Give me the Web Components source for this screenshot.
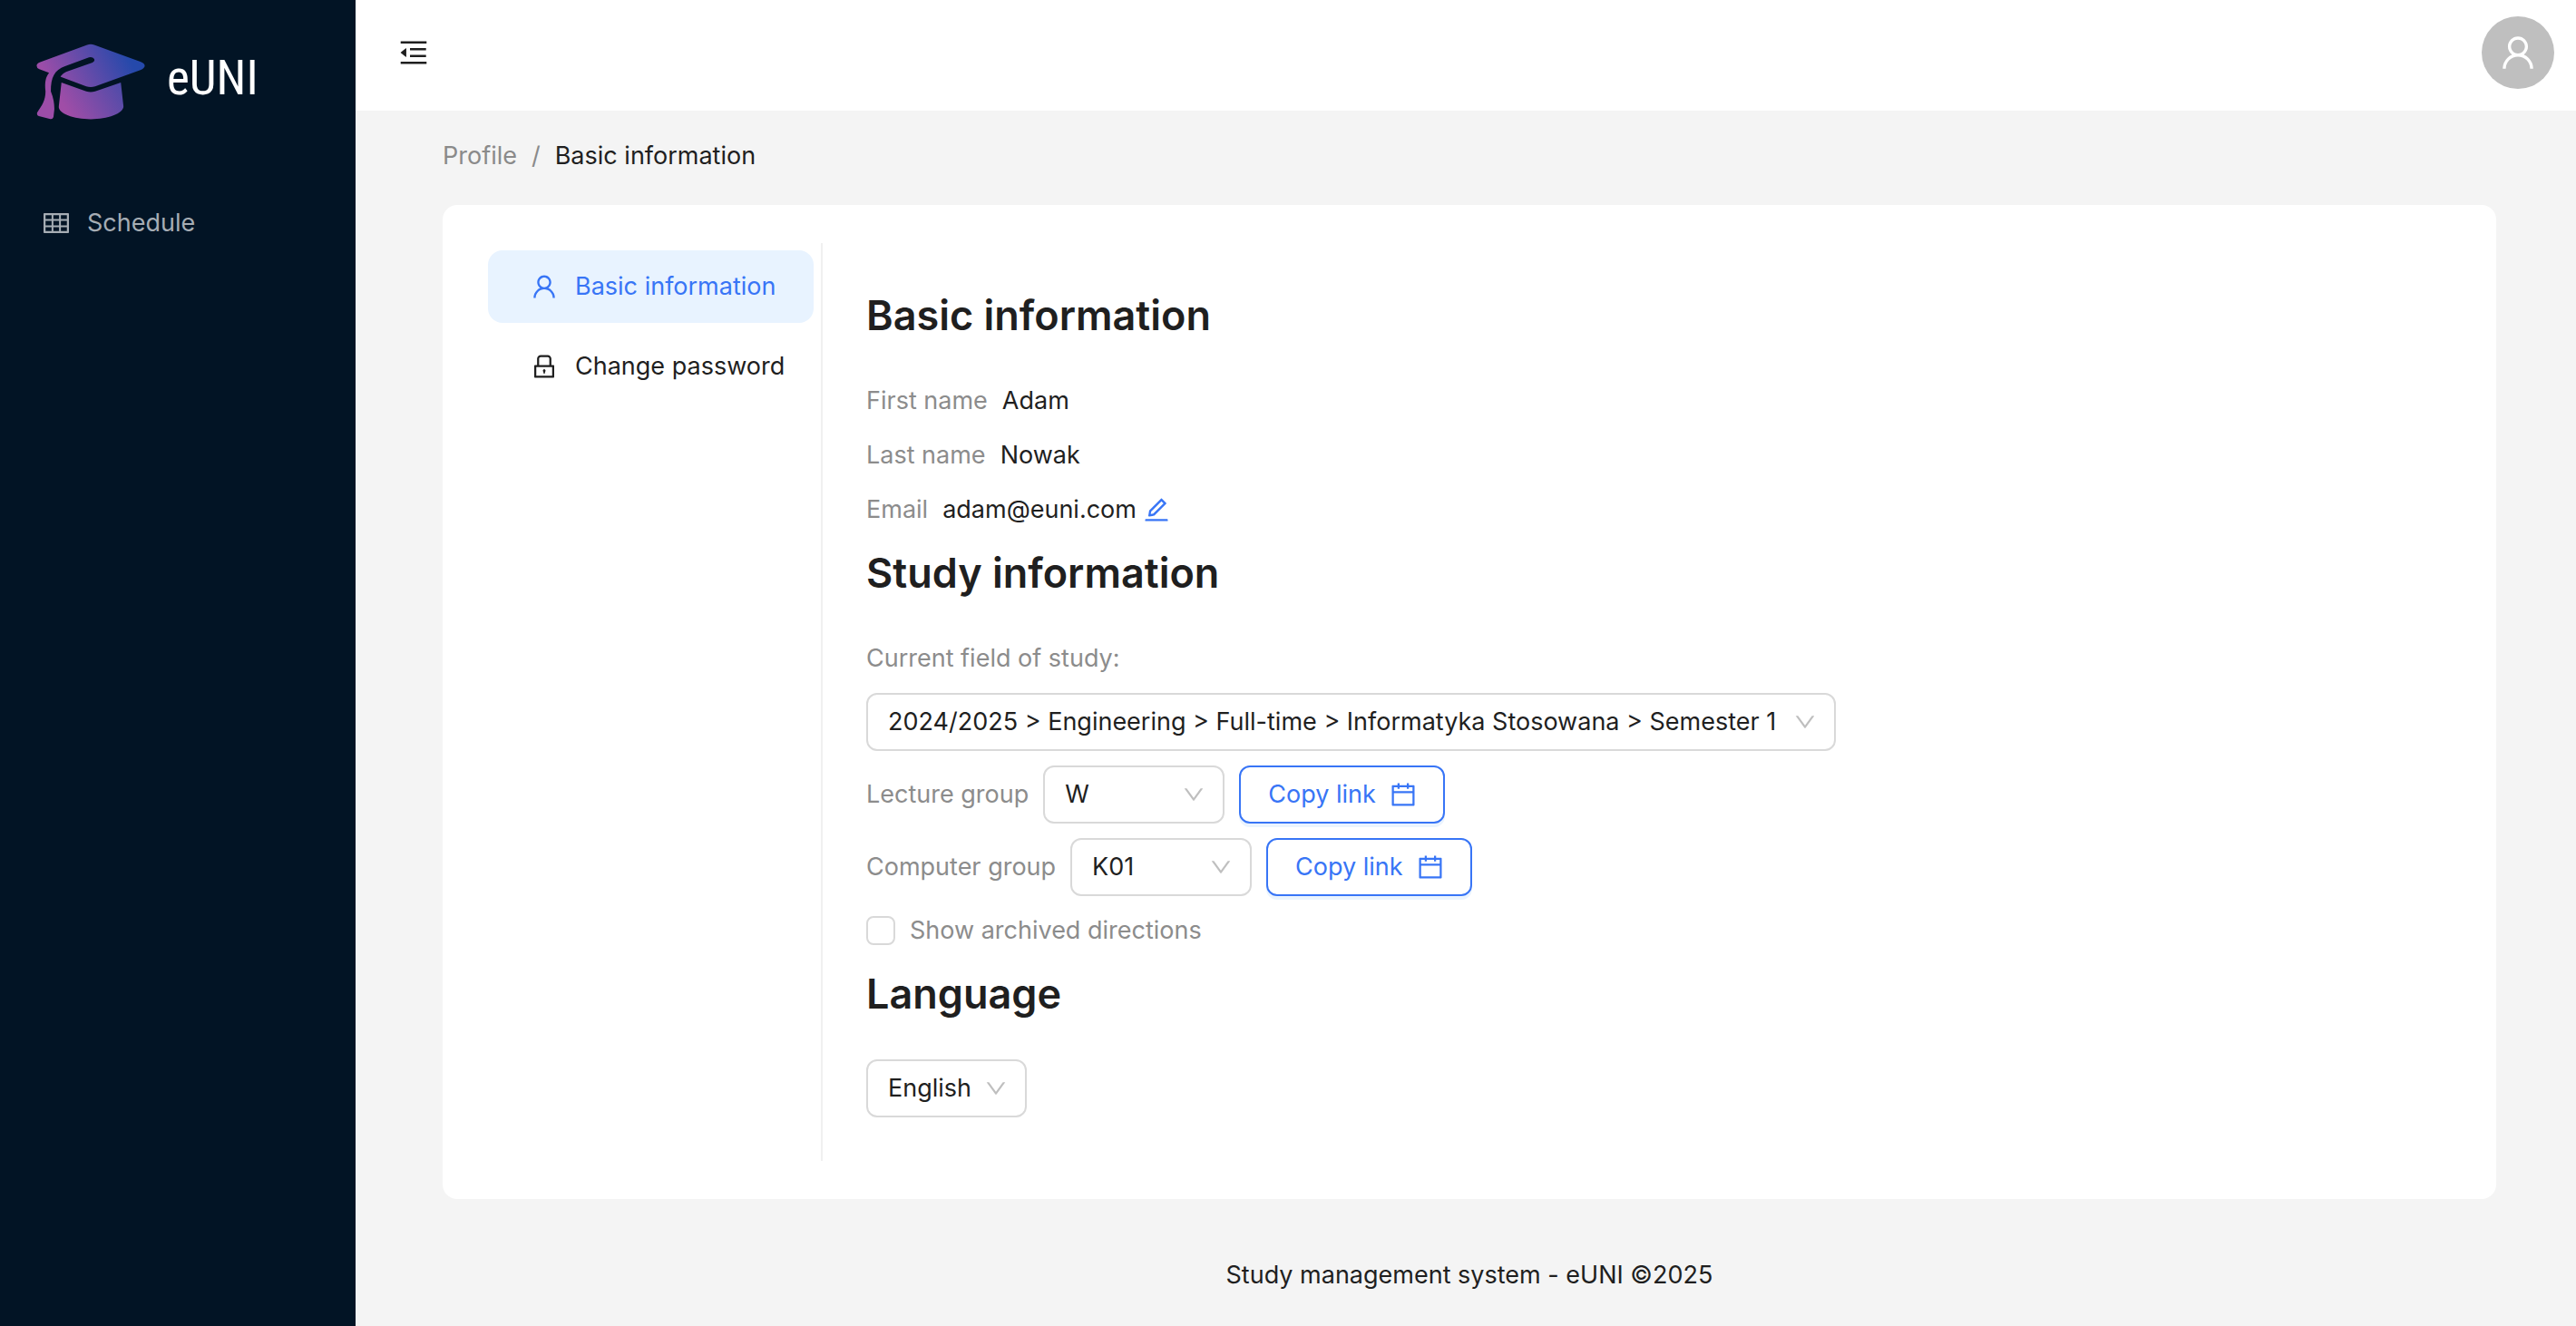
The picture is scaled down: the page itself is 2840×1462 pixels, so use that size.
<!DOCTYPE html>
<html lang="en">
<head>
<meta charset="utf-8">
<title>eUNI</title>
<style>
  html, body { margin: 0; height: 100%; }
  body { font-family: Inter, "Liberation Sans", sans-serif; font-size: 27px; line-height: 44px; color: #1f1f1f; background: #f4f4f4; }
</style>
</head>
<body>
<euni-app></euni-app>
<script>
const ICONS = {
  user: '<path d="M858.5 763.6a374 374 0 0 0-80.6-119.5 375.63 375.63 0 0 0-119.5-80.6c-.4-.2-.8-.3-1.2-.5C719.5 518 760 444.7 760 362c0-137-111-248-248-248S264 225 264 362c0 82.700 40.500 156 102.800 201.100-.4.2-.8.3-1.200.5-44.800 18.900-85 46-119.500 80.600a375.630 375.630 0 0 0-80.600 119.500A371.700 371.700 0 0 0 136 901.800a8 8 0 0 0 8 8.200h60c4.400 0 7.900-3.500 8-7.800 2-77.200 33-149.500 87.800-204.300 56.700-56.700 132-87.900 212.200-87.900s155.500 31.200 212.200 87.900C779 752.700 810 825 812 902.200c.1 4.400 3.600 7.800 8 7.800h60a8 8 0 0 0 8-8.200c-1-47.800-10.900-94.300-29.500-138.200zM512 534c-45.900 0-89.100-17.900-121.600-50.400S340 407.900 340 362c0-45.900 17.900-89.100 50.400-121.600S466.100 190 512 190s89.100 17.900 121.600 50.400S684 316.100 684 362c0 45.900-17.900 89.100-50.400 121.600S557.900 534 512 534z"/>',
  lock: '<path d="M832 464h-68V240c0-70.700-57.300-128-128-128H388c-70.700 0-128 57.300-128 128v224h-68c-17.700 0-32 14.300-32 32v384c0 17.700 14.300 32 32 32h640c17.700 0 32-14.300 32-32V496c0-17.700-14.300-32-32-32zM332 240c0-30.900 25.100-56 56-56h248c30.900 0 56 25.100 56 56v224H332V240zm460 600H232V536h560v304zM484 701v53c0 4.400 3.600 8 8 8h40c4.400 0 8-3.600 8-8v-53a48.010 48.010 0 1 0-56 0z"/>',
  table: '<path d="M928 160H96c-17.700 0-32 14.300-32 32v640c0 17.700 14.300 32 32 32h832c17.700 0 32-14.300 32-32V192c0-17.700-14.300-32-32-32zm-40 208H676V232h212v136zm0 224H676V432h212v160zM412 432h200v160H412V432zm200-64H412V232h200v136zm-476 64h212v160H136V432zm0-200h212v136H136V232zm0 424h212v136H136V656zm276 0h200v136H412V656zm476 136H676V656h212v136z"/>',
  fold: '<path d="M408 442h480c4.400 0 8-3.600 8-8v-56c0-4.400-3.600-8-8-8H408c-4.400 0-8 3.600-8 8v56c0 4.400 3.600 8 8 8zm-8 204c0 4.400 3.600 8 8 8h480c4.400 0 8-3.600 8-8v-56c0-4.400-3.600-8-8-8H408c-4.400 0-8 3.600-8 8v56zm504-486H120c-4.400 0-8 3.600-8 8v56c0 4.400 3.600 8 8 8h784c4.400 0 8-3.600 8-8v-56c0-4.400-3.600-8-8-8zm0 632H120c-4.400 0-8 3.600-8 8v56c0 4.400 3.600 8 8 8h784c4.400 0 8-3.600 8-8v-56c0-4.400-3.600-8-8-8zM115.400 518.900L271.700 642c5.800 4.600 14.400.5 14.400-6.900V388.900c0-7.400-8.500-11.500-14.400-6.900L115.400 505.100a8.740 8.740 0 0 0 0 13.800z"/>',
  down: '<path d="M884 256h-75c-5.100 0-9.900 2.500-12.900 6.600L512 654.200 227.900 262.600c-3-4.100-7.800-6.600-12.900-6.600h-75c-6.500 0-10.300 7.400-6.500 12.700l352.600 486.100c12.800 17.600 39 17.600 51.700 0l352.600-486.100c3.900-5.300.1-12.700-6.400-12.700z"/>',
  edit: '<path d="M257.700 752c2 0 4-.2 6-.5L431.900 722c2-.4 3.900-1.300 5.300-2.800l423.900-423.900a9.960 9.960 0 0 0 0-14.100L694.900 114.900c-1.900-1.900-4.400-2.900-7.100-2.900s-5.200 1-7.100 2.900L256.800 538.800c-1.500 1.500-2.400 3.300-2.800 5.300l-29.500 168.200a33.500 33.500 0 0 0 9.400 29.800c6.600 6.400 14.900 9.900 23.800 9.900zm67.400-174.400L687.800 215l73.300 73.300-362.700 362.600-88.900 15.700 15.600-89zM880 836H144c-17.700 0-32 14.300-32 32v36c0 4.400 3.600 8 8 8h784c4.400 0 8-3.600 8-8v-36c0-17.700-14.300-32-32-32z"/>',
  calendar: '<path d="M880 184H712v-64c0-4.400-3.600-8-8-8h-56c-4.400 0-8 3.600-8 8v64H384v-64c0-4.400-3.600-8-8-8h-56c-4.400 0-8 3.600-8 8v64H144c-17.700 0-32 14.300-32 32v664c0 17.700 14.300 32 32 32h736c17.700 0 32-14.300 32-32V216c0-17.700-14.300-32-32-32zm-40 656H184V460h656v380zM184 392V256h128v48c0 4.400 3.600 8 8 8h56c4.400 0 8-3.600 8-8v-48h256v48c0 4.400 3.600 8 8 8h56c4.400 0 8-3.600 8-8v-48h128v136H184z"/>'
};

class EuniBase extends HTMLElement {
  connectedCallback() {
    if (this.shadowRoot) return;
    this.attachShadow({ mode: 'open' }).innerHTML =
      '<style>*{box-sizing:border-box}a{color:inherit;text-decoration:none}button,select,input{font:inherit;color:inherit;margin:0}' +
      this.styles() + '</style>' + this.markup();
  }
}
const define = (name, styles, markup) => customElements.define(name, class extends EuniBase {
  styles() { return styles; }
  markup() { return typeof markup === 'function' ? markup(this) : markup; }
});

define('euni-icon',
  ':host{display:block;flex:none;width:var(--icon-size,28px);height:var(--icon-size,28px)}svg{display:block;width:100%;height:100%;fill:currentColor}',
  el => `<svg viewBox="64 64 896 896" aria-hidden="true">${ICONS[el.getAttribute('name')]}</svg>`);

define('euni-logo',
  `:host{display:block}
   a{display:flex;align-items:flex-start;gap:24px;color:#fff}
   svg{display:block;width:120px;height:84px;flex:none}
   span{font:400 53px/76px "Roboto Condensed","Open Sans Condensed","Liberation Sans Narrow","Liberation Sans",sans-serif}`,
  `<a href="#home"><svg viewBox="0 0 122 86" aria-hidden="true">
    <defs>
      <linearGradient id="board" gradientUnits="userSpaceOnUse" x1="18" y1="50" x2="100" y2="8"><stop offset="0" stop-color="#9c4da8"/><stop offset="1" stop-color="#2549ab"/></linearGradient>
      <linearGradient id="cap" gradientUnits="userSpaceOnUse" x1="36" y1="80" x2="98" y2="44"><stop offset="0" stop-color="#a04da7"/><stop offset="1" stop-color="#4b4ba9"/></linearGradient>
    </defs>
    <path fill="url(#board)" d="M57 1.500Q61 0 65 1.500L117 20.500Q122 22.500 122 25T117 30L66 48.500Q61 50 56 48.500L28 38Q26 37 28 36Q30 33 36 31L63 21.500Q66 20 65 17.500Q63 14.500 59 15.500L32 25.500C20 30 16 38 16 54Q20 64 20 74L19 83Q18 86 14.500 85L2.500 82Q0 81 .5 78C6 70 10 64 10 54C9 44 10 38 14 33L3 29Q0 27.500 0 25T4 21Z"/>
    <path fill="url(#cap)" d="M28 44L56 54Q61 55.500 66 54L95 44L98 71C98 79 80 85.500 61 85.500S24 79 25 71Z"/>
  </svg><span>eUNI</span></a>`);

define('euni-sidebar',
  `:host{display:flex;flex-direction:column;gap:74px;width:392px;flex:none;background:#021425;padding-top:48px}
   euni-logo{padding-left:40px}
   nav a{display:flex;align-items:center;gap:20px;height:80px;padding:0 48px;color:#a6adb4}`,
  `<euni-logo></euni-logo><nav aria-label="Main"><a href="#schedule"><euni-icon name="table"></euni-icon>Schedule</a></nav>`);

define('euni-header',
  `:host{display:flex;justify-content:space-between;align-items:flex-start;padding:18px 24px 24px 48px;background:#fff}
   button{display:grid;place-items:center;border:0;background:none;padding:0;height:80px;--icon-size:32px}
   .avatar{width:80px;border-radius:50%;background:#bfbfbf;color:#fff;--icon-size:40px}`,
  `<button type="button" aria-label="Toggle menu"><euni-icon name="fold"></euni-icon></button>
   <button type="button" class="avatar" aria-label="Account"><euni-icon name="user"></euni-icon></button>`);

define('euni-breadcrumb',
  `:host{display:block}ol{display:flex;gap:16px;list-style:none;margin:0;padding:0;color:#8a8a8a}li{display:flex;gap:16px}li:last-child{color:#1f1f1f}`,
  `<nav aria-label="Breadcrumb"><ol><li><a href="#profile">Profile</a><span>/</span></li><li aria-current="page">Basic information</li></ol></nav>`);

define('euni-menu-item',
  `:host{display:block}
   a{display:flex;align-items:center;gap:20px;height:80px;padding:0 32px 0 48px;border-radius:16px;white-space:nowrap}
   :host([selected]) a{background:#e8f3ff;color:#3875f6}`,
  el => `<a href="#${el.getAttribute('icon')}"><euni-icon name="${el.getAttribute('icon')}"></euni-icon><slot></slot></a>`);

define('euni-field',
  `:host{display:flex;align-items:center;gap:16px}.label{color:#8c8c8c}.value{display:flex;align-items:center;gap:8px}`,
  el => `<span class="label">${el.getAttribute('label')}</span><span class="value"><slot></slot></span>`);

define('euni-select',
  `:host{display:flex;align-items:center;gap:16px}
   label{color:#8c8c8c}
   .box{display:grid;align-items:center;width:var(--select-width,auto);--icon-size:24px}
   select{grid-area:1/1;appearance:none;width:100%;height:64px;border:2px solid #d9d9d9;border-radius:12px;background:#fff;padding:0 56px 0 22px;line-height:44px}
   euni-icon{grid-area:1/1;justify-self:end;margin-right:22px;color:#bfbfbf;pointer-events:none}`,
  el => `${el.hasAttribute('label') ? `<label for="s">${el.getAttribute('label')}</label>` : ''}<div class="box"><select id="s" aria-label="${el.getAttribute('label') || el.getAttribute('name')}"><option>${el.getAttribute('value')}</option></select><euni-icon name="down"></euni-icon></div>`);

define('euni-copy-button',
  `:host{display:block}
   button{display:flex;align-items:center;gap:16px;height:64px;padding:0 30px;border:2px solid #3875f6;border-radius:12px;background:#fff;color:#3875f6;box-shadow:0 4px 0 #ebf4fe}`,
  `<button type="button">Copy link<euni-icon name="calendar"></euni-icon></button>`);

define('euni-checkbox',
  `:host{display:block}label{display:flex;align-items:center;gap:16px;color:#8c8c8c}
   input{appearance:none;width:32px;height:32px;border:2px solid #d9d9d9;border-radius:8px;background:#fff}input:checked{background:#3875f6;border-color:#3875f6}`,
  `<label><input type="checkbox"><slot></slot></label>`);

define('euni-section',
  `:host{display:flex;flex-direction:column;align-items:flex-start;gap:16px}h2{margin:0 0 24px;font-size:45px;line-height:64px;font-weight:600}`,
  el => `<h2>${el.getAttribute('heading')}</h2><slot></slot>`);

define('euni-profile',
  `:host{display:flex;background:#fff;border-radius:16px;padding:42px}
   .menu{display:flex;flex-direction:column;gap:8px;width:377px;flex:none;padding:8px;border-right:2px solid #f0f0f0}
   .content{flex:1;min-width:0;display:flex;flex-direction:column;gap:16px;padding:48px}
   .row{display:flex;align-items:center;gap:16px}
   .group{--select-width:200px}
   .edit{border:0;background:none;padding:0;color:#3875f6}`,
  `<nav class="menu" aria-label="Profile"><euni-menu-item icon="user" selected>Basic information</euni-menu-item><euni-menu-item icon="lock">Change password</euni-menu-item></nav>
   <div class="content">
    <euni-section heading="Basic information">
      <euni-field label="First name">Adam</euni-field>
      <euni-field label="Last name">Nowak</euni-field>
      <euni-field label="Email">adam@euni.com<button class="edit" type="button" aria-label="Edit email"><euni-icon name="edit"></euni-icon></button></euni-field>
    </euni-section>
    <euni-section heading="Study information">
      <euni-field label="Current field of study:"></euni-field>
      <euni-select style="--select-width:1069px" name="Field of study" value="2024/2025 &gt; Engineering &gt; Full-time &gt; Informatyka Stosowana &gt; Semester 1"></euni-select>
      <div class="row"><euni-select class="group" label="Lecture group" value="W"></euni-select><euni-copy-button></euni-copy-button></div>
      <div class="row"><euni-select class="group" label="Computer group" value="K01"></euni-select><euni-copy-button></euni-copy-button></div>
      <euni-checkbox>Show archived directions</euni-checkbox>
    </euni-section>
    <euni-section heading="Language">
      <euni-select style="--select-width:177px" name="Language" value="English"></euni-select>
    </euni-section>
   </div>`);

define('euni-app',
  `:host{display:flex;min-height:100vh}
   .page{flex:1;min-width:0;display:flex;flex-direction:column}
   main{display:flex;flex-direction:column;gap:32px;padding:28px 88px 0 96px}
   footer{text-align:center;padding:62px 88px 32px 96px}`,
  `<euni-sidebar></euni-sidebar><div class="page"><euni-header></euni-header><main><euni-breadcrumb></euni-breadcrumb><euni-profile></euni-profile></main><footer>Study management system - eUNI ©2025</footer></div>`);
</script>
</body>
</html>
